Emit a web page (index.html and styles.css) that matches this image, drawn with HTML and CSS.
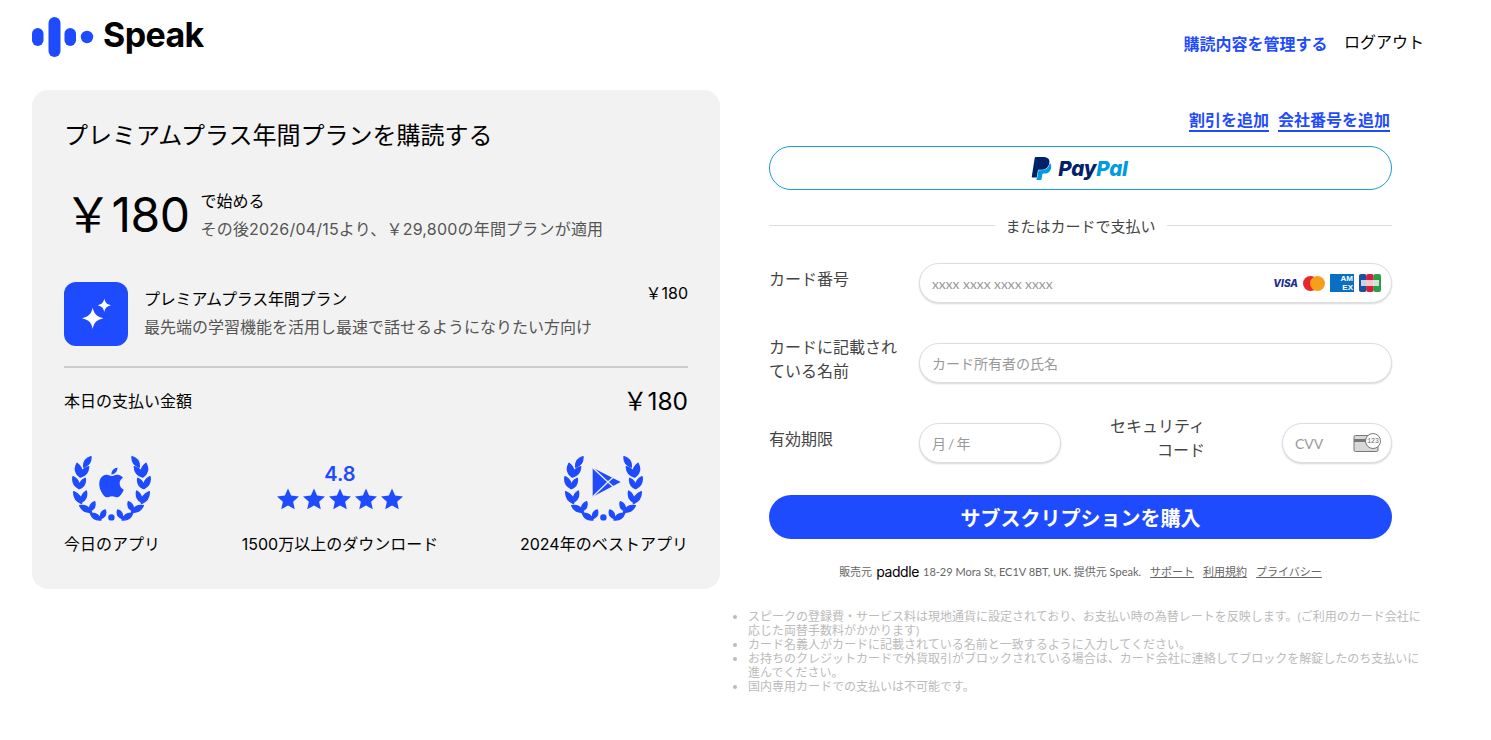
FILE: index.html
```html
<!DOCTYPE html>
<html lang="ja">
<head>
<meta charset="utf-8">
<title>Speak</title>
<link rel="stylesheet" href="styles.css">
</head>
<body>
<svg class="defs" width="0" height="0" aria-hidden="true">
  <defs>
    <path id="laurel-side" d="M19 .7Q19.450 8.750 11.700 11Q11.250 2.950 19 .7ZM5 7.300Q12.400 12.900 8 21Q.6 15.500 5 7.300ZM16.700 10.700Q16.200 19 8.500 21Q8.500 12.600 16.700 10.700ZM1 20.700Q8.450 24.350 7 32.500Q-.45 28.850 1 20.700ZM13.300 22.300Q14.300 29.650 7.500 32.500Q6.500 25.150 13.300 22.300ZM1.700 35.700Q9.800 38.850 9.500 47.500Q1.400 44.350 1.700 35.700ZM14.300 35Q16 42.450 9.500 46.500Q7.800 39.050 14.300 35ZM7.700 49.700Q15.950 48.450 19.500 56Q11.250 57.250 7.700 49.700ZM22.700 45.700Q24.400 52.400 18 55Q16.300 48.300 22.700 45.700ZM18.300 57.300Q26.300 56.400 29 64Q21 64.900 18.300 57.300ZM33.300 54Q35.150 60.300 29 62.500Q27.150 56.200 33.300 54Z"/>
    <g id="laurel">
      <use class="laurel-stroke" href="#laurel-side"/>
      <use class="laurel-stroke" href="#laurel-side" transform="translate(79 0) scale(-1 1)"/>
      <circle cx="39.400" cy="61.400" r="3.200"/>
    </g>
    <path id="star" d="M12 .5L15.400 8.300 24 9.200 17.600 14.900 19.400 23.300 12 19 4.600 23.300 6.400 14.900 0 9.200 8.600 8.300Z"/>
  </defs>
</svg>
<header class="topbar">
  <div class="logo">
    <svg class="logo-mark" viewBox="0 0 62 40" width="62" height="40">
      <rect x="0" y="11" width="11.500" height="18" rx="5.750"/>
      <rect x="16.500" y="0" width="12" height="40" rx="6"/>
      <rect x="32.500" y="11" width="11.500" height="18" rx="5.750"/>
      <circle cx="55" cy="20" r="6.200"/>
    </svg>
    <span class="logo-word">Speak</span>
  </div>
  <nav class="topnav">
    <a class="nav-manage">購読内容を管理する</a>
    <a class="nav-logout">ログアウト</a>
  </nav>
</header>
<main class="page">
  <section class="summary">
    <h1 class="summary-title">プレミアムプラス年間プランを購読する</h1>
    <div class="price-row">
      <div class="price-big">￥180</div>
      <div class="price-notes">
        <div class="price-start">で始める</div>
        <div class="price-after">その後2026/04/15より、￥29,800の年間プランが適用</div>
      </div>
    </div>
    <div class="plan">
      <div class="plan-icon">
        <svg viewBox="0 0 64 64" width="64" height="64">
          <path d="M28.700 25.600C30 32 32.500 34.500 39.400 36.300C32.500 38 30 40.500 28.700 47C27.400 40.500 25 38 18 36.300C25 34.500 27.400 32 28.700 25.600Z"/>
          <path d="M40.300 16.500C41.100 20.600 42.600 22 47 23.300C42.600 24.600 41.100 26 40.300 30.100C39.500 26 38 24.600 33.600 23.300C38 22 39.500 20.600 40.300 16.500Z"/>
        </svg>
      </div>
      <div class="plan-text">
        <div class="plan-name">プレミアムプラス年間プラン</div>
        <div class="plan-desc">最先端の学習機能を活用し最速で話せるようになりたい方向け</div>
      </div>
      <div class="plan-price">￥180</div>
    </div>
    <div class="total">
      <span class="total-label">本日の支払い金額</span>
      <span class="total-amount">￥180</span>
    </div>
    <div class="awards">
      <div class="award">
        <svg class="award-art" viewBox="0 0 80 66" width="80" height="66">
          <use href="#laurel"/>
          <svg x="24.500" y="11.500" width="30" height="30" viewBox="0 0 24 24">
            <path d="M12.152 6.896c-.948 0-2.415-1.078-3.960-1.040-2.040.027-3.910 1.183-4.961 3.014-2.117 3.675-.546 9.103 1.519 12.090 1.013 1.454 2.208 3.090 3.792 3.039 1.520-.065 2.090-.987 3.935-.987 1.831 0 2.350.987 3.960.948 1.637-.026 2.676-1.480 3.676-2.948 1.156-1.688 1.636-3.325 1.662-3.415-.039-.013-3.182-1.221-3.220-4.857-.026-3.040 2.480-4.494 2.597-4.559-1.429-2.090-3.623-2.324-4.390-2.376-2-.156-3.675 1.090-4.610 1.090zM15.530 3.830c.843-1.012 1.400-2.427 1.245-3.830-1.207.052-2.662.805-3.532 1.818-.780.896-1.454 2.338-1.273 3.714 1.338.104 2.715-.688 3.559-1.701"/>
          </svg>
        </svg>
        <div class="award-label">今日のアプリ</div>
      </div>
      <div class="award">
        <div class="rating">
          <div class="rating-num">4.8</div>
          <div class="stars">
            <svg viewBox="0 0 24 24" width="22" height="22"><use href="#star"/></svg>
            <svg viewBox="0 0 24 24" width="22" height="22"><use href="#star"/></svg>
            <svg viewBox="0 0 24 24" width="22" height="22"><use href="#star"/></svg>
            <svg viewBox="0 0 24 24" width="22" height="22"><use href="#star"/></svg>
            <svg viewBox="0 0 24 24" width="22" height="22"><use href="#star"/></svg>
          </div>
        </div>
        <div class="award-label">1500万以上のダウンロード</div>
      </div>
      <div class="award">
        <svg class="award-art" viewBox="0 0 80 66" width="80" height="66">
          <use href="#laurel"/>
          <path d="M28.700 11.700L56.700 26 28.700 40.700Z"/>
          <path class="play-cut" d="M28.700 11.700L44 26 28.700 40.700M44 26L50 20.500M44 26L50 31.500"/>
        </svg>
        <div class="award-label">2024年のベストアプリ</div>
      </div>
    </div>
  </section>
  <section class="checkout">
    <div class="checkout-links">
      <a>割引を追加</a>
      <a>会社番号を追加</a>
    </div>
    <button class="paypal">
      <svg viewBox="0 0 24 24" width="23" height="25">
        <path fill="#012169" d="M7.076 21.337H2.470a.641.641 0 0 1-.633-.740L4.944.901C5.026.382 5.474 0 5.998 0h7.460c2.570 0 4.578.543 5.690 1.810 1.010 1.150 1.304 2.420 1.012 4.287-.023.143-.047.288-.077.437-.983 5.050-4.349 6.797-8.647 6.797h-2.190c-.524 0-.968.382-1.050.900l-1.120 7.106z"/>
        <path fill="#009cde" d="M21.222 6.917a3.350 3.350 0 0 0-.607-.541c-.013.076-.026.175-.041.254-.930 4.778-4.005 7.201-9.138 7.201h-2.190a.563.563 0 0 0-.556.479l-1.187 7.527h-.506l-.240 1.516a.560.560 0 0 0 .554.647h3.882c.460 0 .850-.334.922-.788.060-.260.760-4.852.816-5.090a.932.932 0 0 1 .923-.788h.580c3.760 0 6.705-1.528 7.565-5.946.360-1.847.174-3.388-.777-4.471z"/>
      </svg>
      <span class="paypal-word"><span class="pay">Pay</span><span class="pal">Pal</span></span>
    </button>
    <div class="divider"><span>またはカードで支払い</span></div>
    <form class="card-form">
      <div class="form-row">
        <label class="form-label">カード番号</label>
        <div class="pill pill-wide">
          <span class="ph ph-card">xxxx xxxx xxxx xxxx</span>
          <span class="brands">
            <span class="visa">VISA</span>
            <svg viewBox="0 0 22 15" width="22" height="15"><circle cx="7.500" cy="7.500" r="7.500" fill="#e8262b"/><circle cx="14.500" cy="7.500" r="7.500" fill="#f79e1b"/></svg>
            <span class="amex">AM<br>EX</span>
            <svg viewBox="0 0 22 18" width="22" height="18">
              <rect x="0" y="0" width="7.500" height="18" rx="2" fill="#1c4f9c"/>
              <rect x="7.200" y="0" width="7.500" height="18" rx="2" fill="#d3213c"/>
              <rect x="14.500" y="0" width="7.500" height="18" rx="2" fill="#2d9c48"/>
              <rect x="2" y="6" width="18" height="6" fill="#fff" opacity=".75"/>
            </svg>
          </span>
        </div>
      </div>
      <div class="form-row">
        <label class="form-label">カードに記載されている名前</label>
        <div class="pill pill-wide"><span class="ph">カード所有者の氏名</span></div>
      </div>
      <div class="form-row">
        <label class="form-label">有効期限</label>
        <div class="pill pill-exp"><span class="ph ph-exp">月 / 年</span></div>
        <label class="form-label-cvv">セキュリティコード</label>
        <div class="pill pill-cvv">
          <span class="ph">CVV</span>
          <svg viewBox="0 0 28 20" width="28" height="20">
            <rect x="1" y="2.500" width="24" height="16" rx="1.500" fill="#d8d8d8" stroke="#777"/>
            <rect x="1" y="6" width="24" height="3" fill="#777"/>
            <circle cx="20" cy="8" r="7.500" fill="#fff" stroke="#777"/>
            <text class="cvv-num" x="20" y="10">123</text>
          </svg>
        </div>
      </div>
    </form>
    <button class="buy">サブスクリプションを購入</button>
    <div class="seller">
      <span>販売元</span>
      <span class="paddle">paddle</span>
      <span>18-29 Mora St, EC1V 8BT, UK. 提供元 Speak.</span>
      <a>サポート</a>
      <a>利用規約</a>
      <a>プライバシー</a>
    </div>
    <ul class="notes">
      <li>スピークの登録費・サービス料は現地通貨に設定されており、お支払い時の為替レートを反映します。(ご利用のカード会社に応じた両替手数料がかかります)</li>
      <li>カード名義人がカードに記載されている名前と一致するように入力してください。</li>
      <li>お持ちのクレジットカードで外貨取引がブロックされている場合は、カード会社に連絡してブロックを解錠したのち支払いに進んでください。</li>
      <li>国内専用カードでの支払いは不可能です。</li>
    </ul>
  </section>
</main>
</body>
</html>
```
FILE: styles.css
```css
* { box-sizing: border-box; }
html, body { margin: 0; padding: 0; }
body {
  background: #fff;
  color: #000;
  font-family: "Inter", "Noto Sans CJK JP", sans-serif;
  height: 740px;
  overflow: hidden;
}
.defs { display: block; height: 0; }
.topbar {
  height: 90px;
  padding: 16px 67px 0 32px;
  display: flex;
  justify-content: space-between;
  align-items: flex-start;
}
.logo { display: flex; align-items: center; gap: 9px; height: 41px; }
.logo-mark { fill: #1f4bff; }
.logo-word { font-family: "Inter", sans-serif; font-weight: 700; font-size: 34px; letter-spacing: -.6px; line-height: 36px; margin-bottom: 4px; }
.topnav { display: flex; gap: 16.500px; align-items: flex-start; padding-top: 16px; }
.nav-manage { color: #1f4bff; font-weight: 700; font-size: 16px; line-height: 24px; }
.nav-logout { font-size: 16px; line-height: 20px; }
.page { display: flex; padding-left: 32px; gap: 49px; align-items: flex-start; }
.summary {
  width: 688px;
  height: 499px;
  background: #f2f2f2;
  border-radius: 16px;
  padding: 29px 32px 0;
}
.summary-title { margin: 0; font-weight: 400; font-size: 24px; line-height: 34px; }
.price-row { display: flex; align-items: center; margin-top: 32px; gap: 11px; }
.price-big { font-size: 48px; line-height: 60px; letter-spacing: -.5px; }
.price-notes { display: flex; flex-direction: column; gap: 6px; }
.price-start { font-size: 16px; line-height: 22px; }
.price-after { font-size: 16px; line-height: 22px; color: #555; letter-spacing: .2px; }
.plan { display: flex; margin-top: 37px; gap: 16px; align-items: flex-start; }
.plan-icon { width: 64px; height: 64px; background: #1f4bff; border-radius: 12px; fill: #fff; flex: none; }
.plan-icon svg { display: block; }
.plan-text { flex: 1; padding-top: 5px; }
.plan-name { font-size: 16px; line-height: 24px; letter-spacing: -.2px; }
.plan-desc { font-size: 16px; line-height: 24px; color: #555; margin-top: 4px; }
.plan-price { font-size: 16px; line-height: 22px; }
.total {
  border-top: 2px solid #ccc;
  margin-top: 20px;
  padding-top: 18px;
  display: flex;
  justify-content: space-between;
  align-items: center;
}
.total-label { font-size: 16px; line-height: 30px; }
.total-amount { font-size: 24.500px; line-height: 30px; }
.awards { display: flex; justify-content: space-between; margin-top: 40px; }
.award { display: flex; flex-direction: column; align-items: center; }
.award-art { fill: #1f4bff; display: block; }
.laurel-stroke { stroke: #1f4bff; stroke-width: 1.400; stroke-linejoin: round; }
.play-cut { fill: none; stroke: #f2f2f2; stroke-width: 1.300; }
.award-label { font-size: 16px; line-height: 22px; margin-top: 11px; }
.rating { height: 66px; display: flex; flex-direction: column; align-items: center; padding-top: 6px; }
.rating-num { color: #1f4bff; font-size: 20px; font-weight: 600; line-height: 24px; }
.stars { display: flex; gap: 4px; margin-top: 2px; fill: #1f4bff; }
.checkout { width: 623px; position: relative; }
.checkout-links { display: flex; justify-content: flex-end; gap: 9px; padding: 19px 2px 0 0; height: 56px; }
.checkout-links a { color: #1f4bff; font-weight: 700; font-size: 16px; line-height: 22px; height: 23px; border-bottom: 2px solid #1f4bff; }
.paypal {
  display: flex;
  align-items: center;
  justify-content: center;
  gap: 5px;
  width: 100%;
  height: 44px;
  background: #fff;
  border: 1px solid #1a9ad6;
  border-radius: 22px;
  padding: 0 3px 0 0;
}
.paypal-word { font-family: "Inter", sans-serif; font-weight: 800; font-style: italic; font-size: 20.500px; letter-spacing: -.2px; }
.pay { color: #012169; }
.pal { color: #009cde; }
.divider { display: flex; align-items: center; gap: 11px; margin-top: 24px; height: 22px; font-size: 15px; color: #444; }
.divider::before, .divider::after { content: ""; flex: 1; height: 1px; background: #ddd; }
.card-form { display: flex; flex-direction: column; gap: 40px; margin-top: 27px; }
.form-row { display: flex; align-items: flex-start; height: 40px; }
.form-label { width: 150px; flex: none; font-size: 16px; line-height: 26px; color: #444; padding-right: 15px; margin-top: 3px; }
.form-row:nth-child(2) .form-label { margin-top: -8px; line-height: 24px; }
.pill {
  height: 40px;
  background: #fff;
  border: 1px solid #ddd;
  border-radius: 20px;
  box-shadow: 0 1px 2px rgba(0, 0, 0, .16);
  display: flex;
  align-items: center;
  justify-content: space-between;
  padding: 0 10px 0 12px;
}
.pill-wide { width: 473px; }
.pill-exp { width: 142px; }
.pill-cvv { width: 110px; margin-left: 77px; }
.form-label-cvv { width: 96px; margin: -9px 0 0 48px; text-align: right; font-size: 16px; line-height: 24px; color: #444; }
.ph { font-family: "Lato", "Noto Sans CJK JP", sans-serif; font-size: 14px; color: #999; }
.ph-card { font-size: 13.800px; }
.ph-exp { word-spacing: -1.500px; }
.brands { display: flex; align-items: center; gap: 5px; }
.visa { font-family: "Inter", sans-serif; font-style: italic; font-weight: 800; font-size: 10px; color: #1a2d8f; }
.amex { width: 24px; height: 18px; background: #0a6fc4; color: #fff; font-family: "Liberation Sans", sans-serif; font-size: 8px; line-height: 8.500px; text-align: right; padding: 1px 1px 0 0; font-weight: 700; }
.cvv-num { font-family: "Liberation Mono", monospace; font-size: 6.500px; text-anchor: middle; fill: #666; }
.buy {
  display: block;
  width: 100%;
  height: 44px;
  margin-top: 32px;
  border: 0;
  border-radius: 22px;
  background: #1f4bff;
  color: #fff;
  font-family: "Inter", "Noto Sans CJK JP", sans-serif;
  font-weight: 700;
  font-size: 20px;
  padding: 0;
}
.seller {
  display: flex;
  justify-content: center;
  align-items: center;
  gap: 4px;
  margin-top: 23px;
  height: 18px;
  font-family: "Lato", "Noto Sans CJK JP", sans-serif;
  font-size: 11px;
  color: #666;
  white-space: nowrap;
}
.seller a { text-decoration: underline; margin-left: 5px; }
.paddle { font-family: "Inter", sans-serif; font-size: 14px; color: #000; letter-spacing: -.4px; }
.notes {
  width: 690px;
  margin: 30px 0 0 -36px;
  padding: 0 0 0 15px;
  font-family: "Lato", "Noto Sans CJK JP", sans-serif;
  font-size: 12px;
  line-height: 14px;
  color: #bbb;
}
```
